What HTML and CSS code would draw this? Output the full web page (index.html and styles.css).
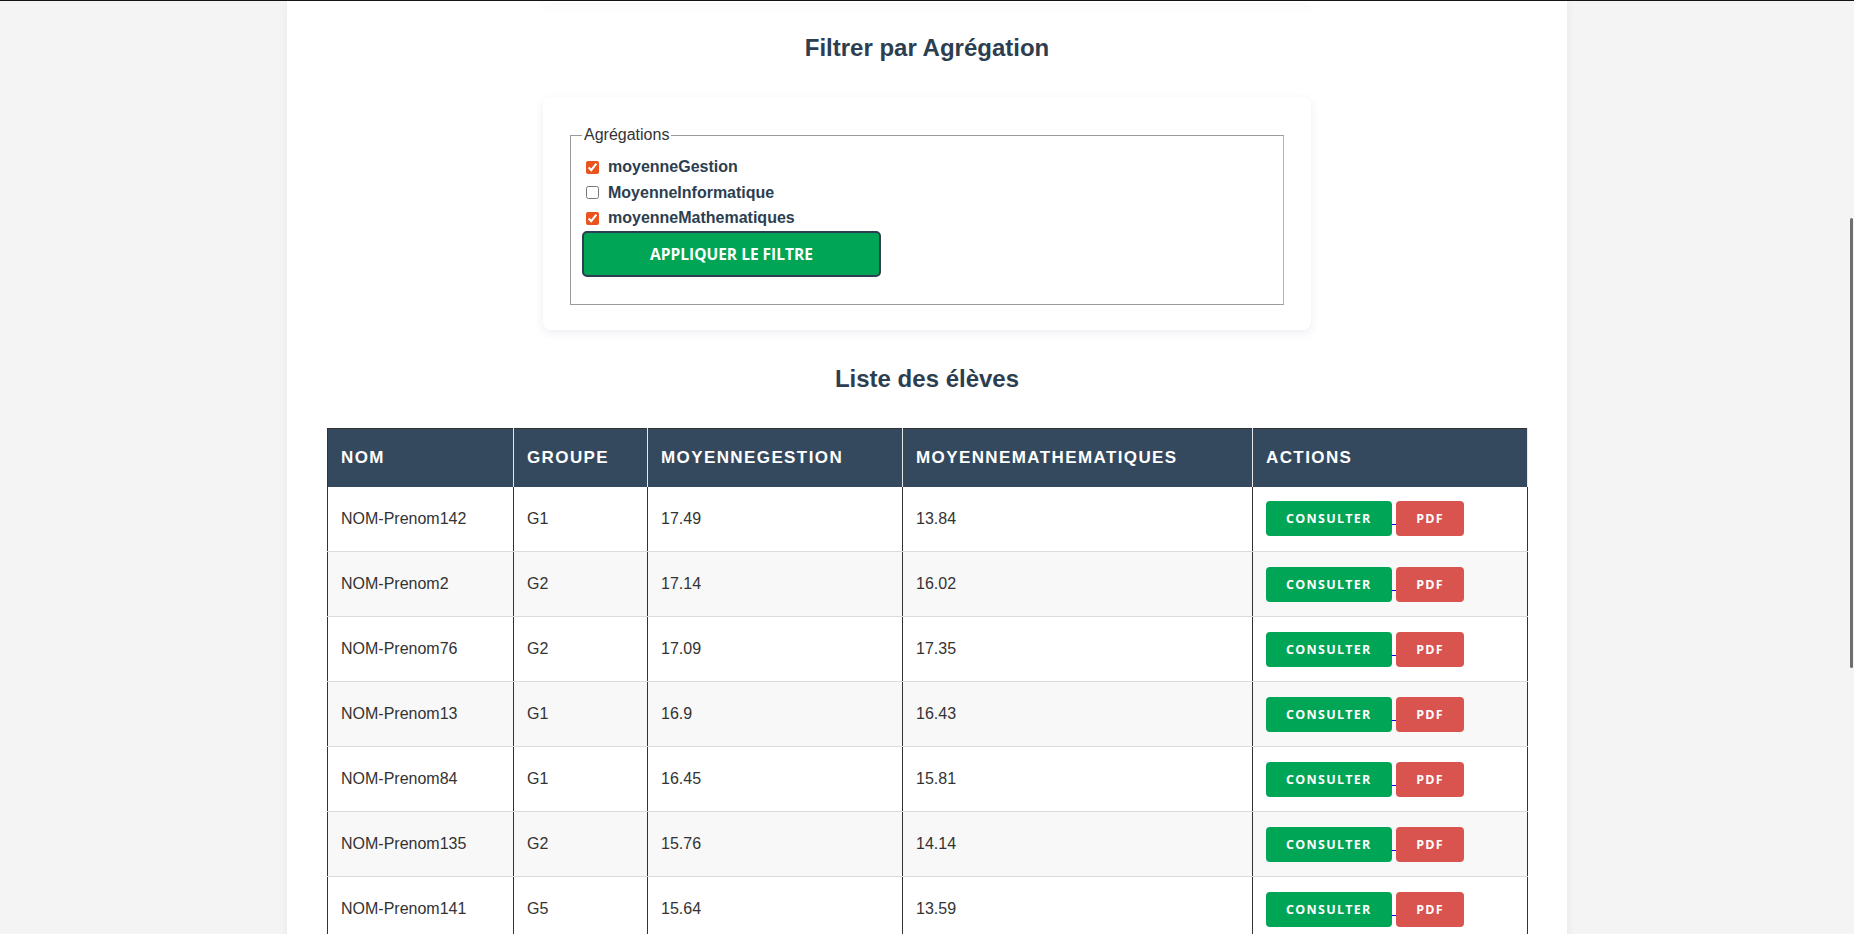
FILE: index.html
```html
<!DOCTYPE html>
<html lang="fr">
<head>
<meta charset="utf-8">
<title>Liste des élèves</title>
<link rel="stylesheet" href="styles.css">
</head>
<body>
<div class="topline"></div>
<div class="page">
  <div class="prev-card"></div>
  <h2 class="title">Filtrer par Agrégation</h2>
  <form class="card">
    <fieldset class="agg">
      <legend>Agrégations</legend>
      <div class="options">
        <label class="opt"><input type="checkbox" checked><span>moyenneGestion</span></label>
        <label class="opt"><input type="checkbox"><span>MoyenneInformatique</span></label>
        <label class="opt"><input type="checkbox" checked><span>moyenneMathematiques</span></label>
      </div>
      <button type="button" class="apply">APPLIQUER LE FILTRE</button>
    </fieldset>
  </form>
  <h2 class="title list-title">Liste des élèves</h2>
  <table class="students">
    <colgroup>
      <col class="c-nom"><col class="c-grp"><col class="c-ges"><col class="c-mat"><col class="c-act">
    </colgroup>
    <thead>
      <tr><th>Nom</th><th>Groupe</th><th>moyenneGestion</th><th>moyenneMathematiques</th><th>Actions</th></tr>
    </thead>
    <tbody>
      <tr><td>NOM-Prenom142</td><td>G1</td><td>17.49</td><td>13.84</td><td><a class="lnk" href="#"><button class="btn ok">CONSULTER</button> </a><a class="lnk" href="#"><button class="btn pdf">PDF</button></a></td></tr>
      <tr><td>NOM-Prenom2</td><td>G2</td><td>17.14</td><td>16.02</td><td><a class="lnk" href="#"><button class="btn ok">CONSULTER</button> </a><a class="lnk" href="#"><button class="btn pdf">PDF</button></a></td></tr>
      <tr><td>NOM-Prenom76</td><td>G2</td><td>17.09</td><td>17.35</td><td><a class="lnk" href="#"><button class="btn ok">CONSULTER</button> </a><a class="lnk" href="#"><button class="btn pdf">PDF</button></a></td></tr>
      <tr><td>NOM-Prenom13</td><td>G1</td><td>16.9</td><td>16.43</td><td><a class="lnk" href="#"><button class="btn ok">CONSULTER</button> </a><a class="lnk" href="#"><button class="btn pdf">PDF</button></a></td></tr>
      <tr><td>NOM-Prenom84</td><td>G1</td><td>16.45</td><td>15.81</td><td><a class="lnk" href="#"><button class="btn ok">CONSULTER</button> </a><a class="lnk" href="#"><button class="btn pdf">PDF</button></a></td></tr>
      <tr><td>NOM-Prenom135</td><td>G2</td><td>15.76</td><td>14.14</td><td><a class="lnk" href="#"><button class="btn ok">CONSULTER</button> </a><a class="lnk" href="#"><button class="btn pdf">PDF</button></a></td></tr>
      <tr><td>NOM-Prenom141</td><td>G5</td><td>15.64</td><td>13.59</td><td><a class="lnk" href="#"><button class="btn ok">CONSULTER</button> </a><a class="lnk" href="#"><button class="btn pdf">PDF</button></a></td></tr>
    </tbody>
  </table>
</div>
<div class="scroll-thumb"></div>
</body>
</html>
```
FILE: styles.css
```css
html, body {
  margin: 0;
  padding: 0;
  height: 100%;
  overflow: hidden;
}
body {
  background: #f4f4f4;
  font-family: "Liberation Sans", Arial, sans-serif;
  color: #333;
}
.topline {
  height: 1px;
  background: #151515;
}
.page {
  width: 1280px;
  margin: 0 auto;
  box-sizing: border-box;
  padding: 0 40px 40px;
  background: #fff;
  box-shadow: 0 0 10px rgba(0, 0, 0, 0.05);
  min-height: 1200px;
}
.prev-card {
  width: 768px;
  height: 2px;
  margin: 0 auto;
  background: #fff;
  border-radius: 0 0 8px 8px;
  box-shadow: 0 3px 10px rgba(70, 40, 110, 0.09);
}
.title {
  margin: 31px 0 35px;
  font-size: 24px;
  line-height: 28px;
  font-weight: 700;
  color: #2c3e50;
  text-align: center;
}
.list-title {
  margin: 35px 0 35px;
}
.card {
  width: 768px;
  box-sizing: border-box;
  margin: 0 auto;
  padding: 29px 25px 25px;
  background: #fff;
  border-radius: 8px;
  box-shadow: 0 3px 10px rgba(70, 40, 110, 0.09);
}
.agg {
  margin: 0 2px;
  padding: 12px 11px 27px;
  border-color: #9a9a9a #b5b5b5 #9a9a9a #9a9a9a;
  border-width: 1px;
  border-style: solid;
}
.agg legend {
  font-size: 16px;
  line-height: 18px;
  padding: 0 2px;
  color: #333;
}
.options {
  display: flex;
  flex-direction: column;
  gap: 3.5px;
}
.opt {
  display: flex;
  align-items: center;
  gap: 9px;
  height: 22px;
  font-size: 16px;
  font-weight: 700;
  color: #2c3e50;
}
.opt input {
  margin: 0 0 0 4px;
  width: 13px;
  height: 13px;
  accent-color: #e9541e;
}
.apply {
  display: block;
  margin-top: 2px;
  width: 299px;
  height: 46px;
  box-sizing: border-box;
  background: #00a556;
  color: #fff;
  border: 2px solid #2c3e50;
  border-radius: 5px;
  font-family: "Open Sans", sans-serif;
  font-weight: 700;
  font-size: 15.5px;
  cursor: pointer;
}
.students {
  width: 1200px;
  table-layout: fixed;
  border-collapse: collapse;
  border: 1px solid #333;
}
.c-nom { width: 186px; }
.c-grp { width: 134px; }
.c-ges { width: 255px; }
.c-mat { width: 350px; }
.c-act { width: 275px; }
.students th {
  background: #34495e;
  color: #fff;
  text-align: left;
  text-transform: uppercase;
  font-size: 17px;
  letter-spacing: 1.4px;
  font-weight: 700;
  height: 58px;
  padding: 0 13px;
  box-sizing: border-box;
  border-right: 1px solid #e6e6e6;
}
.students td {
  height: 65px;
  padding: 0 13px;
  box-sizing: border-box;
  font-size: 16px;
  color: #333;
  border-right: 1px solid #333;
  border-bottom: 1px solid #dcdcdc;
}
.students tbody tr:nth-child(even) td {
  background: #f8f8f8;
}
.lnk {
  color: #0000ee;
  text-decoration: underline;
}
.btn {
  height: 35px;
  padding: 0 20px;
  border: none;
  border-radius: 4px;
  color: #fff;
  font-family: "Open Sans", sans-serif;
  font-weight: 700;
  font-size: 12.5px;
  letter-spacing: 1.3px;
  cursor: pointer;
}
.btn.ok { background: #00a556; }
.btn.pdf { background: #d9534f; }
.scroll-thumb {
  position: fixed;
  right: 1px;
  top: 218px;
  width: 3px;
  height: 450px;
  border-radius: 2px;
  background: #6e6e6e;
}
```
